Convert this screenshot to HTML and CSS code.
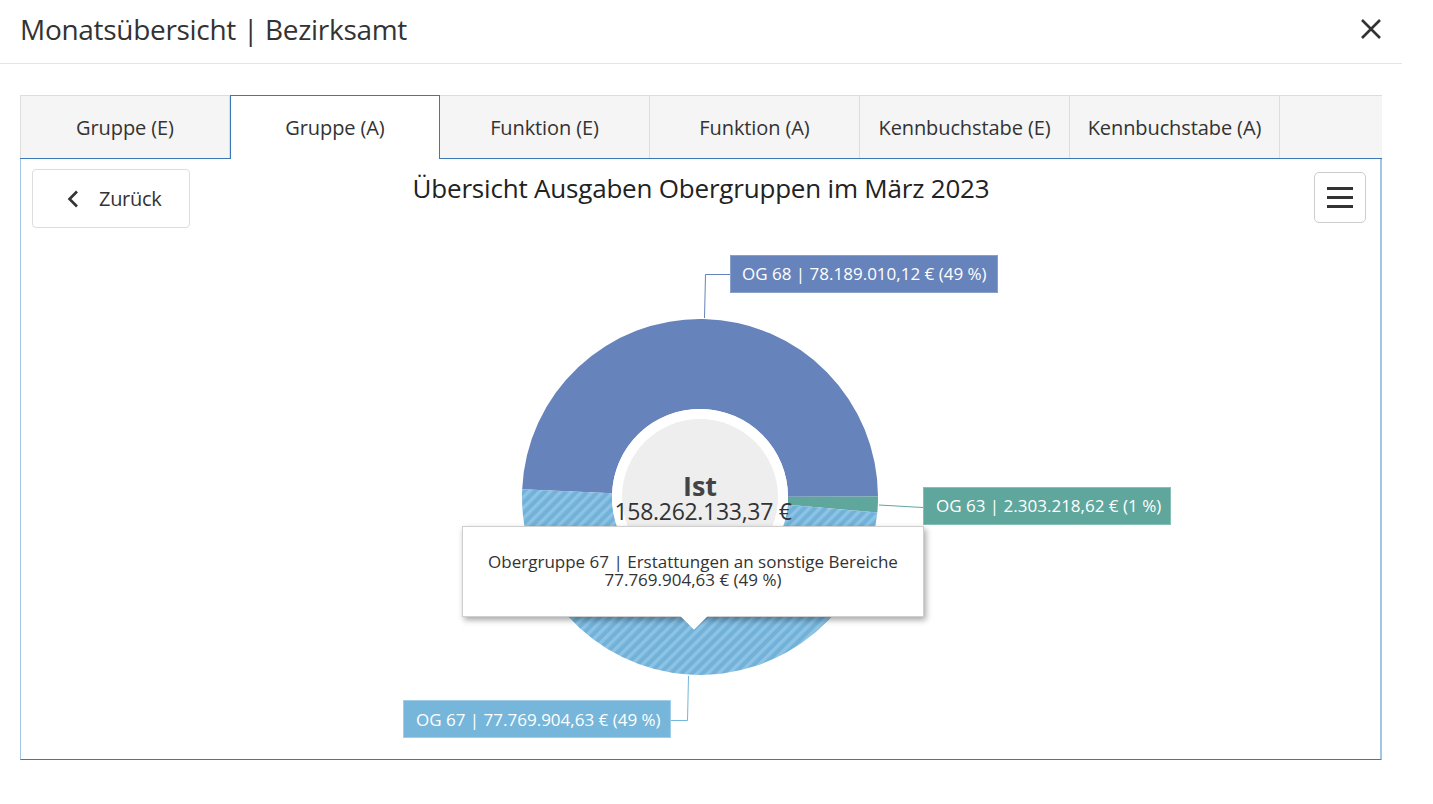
FILE: index.html
```html
<!DOCTYPE html>
<html lang="de">
<head>
<meta charset="utf-8">
<title>Monatsübersicht | Bezirksamt</title>
<link rel="stylesheet" href="styles.css">
</head>
<body>
<div class="modal">
  <header class="modal-header">
    <h1 class="modal-title">Monatsübersicht | Bezirksamt</h1>
    <button class="close-btn" aria-label="Schließen">
      <svg width="22" height="22" viewBox="0 0 22 22"><path d="M2 2 L20 20 M20 2 L2 20" stroke="#333" stroke-width="2.6" fill="none"/></svg>
    </button>
  </header>
  <div class="modal-body">
    <div class="tabs">
      <ul class="tab-list">
        <li class="tab">Gruppe (E)</li>
        <li class="tab active">Gruppe (A)</li>
        <li class="tab">Funktion (E)</li>
        <li class="tab">Funktion (A)</li>
        <li class="tab">Kennbuchstabe (E)</li>
        <li class="tab">Kennbuchstabe (A)</li>
        <li class="tab-filler"></li>
      </ul>
      <div class="panel">
        <svg class="chart" width="1360" height="600" viewBox="21 159 1360 600">
          <defs>
            <pattern id="hatch" patternUnits="userSpaceOnUse" width="7.5" height="7.5" patternTransform="rotate(45)">
              <rect width="7.5" height="7.5" fill="#72b2d9"/>
              <rect width="3.4" height="7.5" fill="#8dc3e4"/>
            </pattern>
          </defs>
          <path d="M 522.17 489.24 A 178 178 0 0 1 878.0 496.38 L 788.0 496.69 A 88 88 0 0 0 612.08 493.16 Z" fill="#6783bb"/>
          <path d="M 878.0 496.38 A 178 178 0 0 1 877.32 512.51 L 787.66 504.67 A 88 88 0 0 0 788.0 496.69 Z" fill="#5fa69c"/>
          <path d="M 877.32 512.51 A 178 178 0 0 1 522.17 489.24 L 612.08 493.16 A 88 88 0 0 0 787.66 504.67 Z" fill="url(#hatch)"/>
          <circle cx="700" cy="497" r="88" fill="#fff"/>
          <circle cx="700" cy="497" r="78" fill="#eeeeee"/>
          <text class="center-label" x="700" y="496" text-anchor="middle">Ist</text>
          <text class="center-value" x="703" y="520" text-anchor="middle">158.262.133,37 €</text>

          <polyline points="730,274.5 705.5,274.5 704.5,318" fill="none" stroke="#6783bb" stroke-width="1"/>
          <rect x="730.5" y="255.5" width="267" height="37" fill="#6783bb" stroke="#8aa0cc" stroke-width="1"/>
          <text class="data-label" x="742" y="280">OG 68 | 78.189.010,12 € (49 %)</text>

          <polyline points="879,505 923,507.5" fill="none" stroke="#5fa69c" stroke-width="1"/>
          <rect x="923.5" y="487.5" width="247" height="37" fill="#5fa69c" stroke="#86bfb6" stroke-width="1"/>
          <text class="data-label" x="936" y="512">OG 63 | 2.303.218,62 € (1 %)</text>

          <polyline points="670,720.5 687.5,720.5 688.5,676" fill="none" stroke="#76b6da" stroke-width="1"/>
          <rect x="403.5" y="700.5" width="267" height="37" fill="#76b6da" stroke="#a2cde6" stroke-width="1"/>
          <text class="data-label" x="416" y="726">OG 67 | 77.769.904,63 € (49 %)</text>
        </svg>

        <div class="toolbar">
          <button class="back-btn">
            <svg width="12" height="18" viewBox="0 0 12 18"><polyline points="10,1.5 2.5,9 10,16.5" fill="none" stroke="#333" stroke-width="2.6"/></svg>
            <span>Zurück</span>
          </button>
          <h2 class="chart-title">Übersicht Ausgaben Obergruppen im März 2023</h2>
          <button class="menu-btn" aria-label="Menü">
            <span class="bar"></span><span class="bar"></span><span class="bar"></span>
          </button>
        </div>

        <div class="tooltip">
          <div>Obergruppe 67 | Erstattungen an sonstige Bereiche</div>
          <div>77.769.904,63 € (49 %)</div>
        </div>
      </div>
    </div>
  </div>
</div>
</body>
</html>
```
FILE: styles.css
```css
* { box-sizing: border-box; }
html, body { margin: 0; padding: 0; background: #fff; }
body {
  font-family: "Open Sans", "Noto Sans", "Liberation Sans", sans-serif;
  color: #333;
}
.modal { width: 1402px; }
.modal-header {
  height: 64px;
  border-bottom: 1px solid #e5e5e5;
  display: flex;
  align-items: center;
  justify-content: space-between;
  padding: 0 20px 5px 20px;
}
.modal-title {
  margin: 0;
  font-size: 28px;
  font-weight: 400;
  color: #333;
  letter-spacing: -0.3px;
}
.close-btn {
  border: 0;
  background: none;
  padding: 0;
  width: 22px;
  height: 22px;
  cursor: pointer;
  display: flex;
}
.modal-body { padding: 31px 20px 0 20px; }
.tabs { width: 1362px; }
.tab-list {
  list-style: none;
  margin: 0;
  padding: 0;
  display: flex;
  height: 64px;
  border-bottom: 1px solid #3b78b5;
}
.tab {
  width: 210px;
  height: 63px;
  background: #f5f5f5;
  border-top: 1px solid #dddddd;
  border-right: 1px solid #dddddd;
  display: flex;
  align-items: center;
  justify-content: center;
  font-size: 20px;
  color: #333;
  letter-spacing: -0.1px;
}
.tab:first-child { border-left: 1px solid #dddddd; }
.tab.active {
  background: #fff;
  border: 1px solid #3b78b5;
  border-bottom: 0;
  height: 64px;
}
.tab-filler {
  flex: 1;
  height: 63px;
  background: #f5f5f5;
  border-top: 1px solid #dddddd;
}
.panel {
  position: relative;
  height: 601px;
  border-left: 1px solid #a3c5e4;
  border-right: 2px solid #a3c5e4;
  border-bottom: 1px solid #3b78b5;
}
.chart {
  position: absolute;
  left: 0;
  top: 0;
  display: block;
}
.center-label { font-size: 27px; font-weight: 700; fill: #444; font-family: "Open Sans", sans-serif; }
.center-value { font-size: 23px; fill: #333; font-family: "Open Sans", sans-serif; letter-spacing: -0.3px; }
.data-label { font-size: 17px; fill: #fff; font-family: "Open Sans", sans-serif; }
.toolbar {
  position: relative;
  display: grid;
  grid-template-columns: 1fr auto 1fr;
  align-items: start;
  padding: 10px 14px 0 11px;
}
.back-btn {
  justify-self: start;
  width: 158px;
  height: 59px;
  background: #fff;
  border: 1px solid #dddddd;
  border-radius: 4px;
  display: flex;
  align-items: center;
  gap: 20px;
  padding: 0 0 0 34px;
  font-family: inherit;
  font-size: 20px;
  color: #333;
  letter-spacing: -0.3px;
}
.chart-title {
  margin: 1px 0 0 4px;
  font-size: 26px;
  font-weight: 400;
  color: #222;
  letter-spacing: -0.2px;
}
.menu-btn {
  justify-self: end;
  margin-top: 3px;
  width: 52px;
  height: 51px;
  background: #fff;
  border: 1px solid #cccccc;
  border-radius: 5px;
  display: flex;
  flex-direction: column;
  align-items: center;
  justify-content: center;
  gap: 6px;
  padding: 0;
}
.menu-btn .bar {
  display: block;
  width: 26px;
  height: 3px;
  background: #333;
}
.tooltip {
  position: absolute;
  left: 441px;
  top: 367px;
  width: 462px;
  height: 91px;
  background: #fff;
  border: 1px solid #cfcfcf;
  box-shadow: 2px 3px 6px rgba(0, 0, 0, 0.35);
  display: flex;
  flex-direction: column;
  align-items: center;
  justify-content: center;
  font-size: 17px;
  line-height: 18px;
  color: #333;
  padding-bottom: 2px;
}
.tooltip::after {
  content: "";
  position: absolute;
  left: 221px;
  bottom: -10px;
  width: 20px;
  height: 20px;
  background: #fff;
  transform: rotate(45deg);
  box-shadow: 3px 3px 4px rgba(0, 0, 0, 0.18);
  clip-path: polygon(100% 0, 100% 100%, 0 100%, 0 100%);
}
```
